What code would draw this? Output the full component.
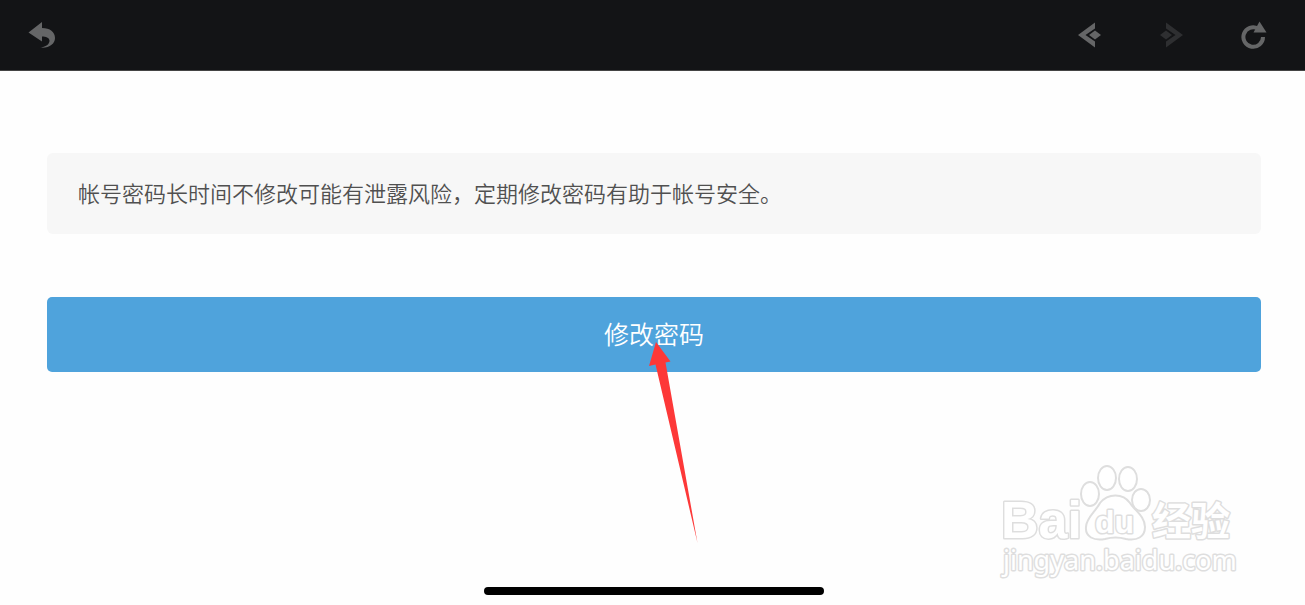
<script>
  let canGoBack = true;
  let canGoForward = false;
</script>

<div class="page">
  <header>
    <button class="nav" aria-label="返回">
      <svg width="28" height="28" viewBox="0 0 28 28">
        <path d="M0.500 11.500 L14 1 V7 C22 7 27 11 27 17 C27 23 21 27.500 12 26.500 C19 26 21.500 22.500 21.500 19.500 C21 16.500 18 15.500 14 15.500 V20.500 Z" />
      </svg>
    </button>
    <div class="tools">
      <button class="nav" aria-label="后退" disabled={!canGoBack}>
        <svg width="28" height="28" viewBox="0 0 28 28">
          <path d="M19 1.500 V7.500 L9.500 14 L19 20.500 V26.500 L2 14 Z" />
          <path d="M19 9.500 L25 14 L19 18.500 L13 14 Z" />
        </svg>
      </button>
      <button class="nav" aria-label="前进" disabled={!canGoForward}>
        <svg width="28" height="28" viewBox="0 0 28 28">
          <path d="M8 1.500 V7.500 L17.500 14 L8 20.500 V26.500 L25 14 Z" />
          <path d="M8 9.500 L14 14 L8 18.500 L2 14 Z" />
        </svg>
      </button>
      <button class="nav" aria-label="刷新">
        <svg width="28" height="28" viewBox="0 0 28 28">
          <path class="ring" d="M18 7.500 A9.800 9.800 0 1 0 23 16" />
          <path d="M19.500 0.500 L26.500 11.500 L13.500 11.500 Z" />
        </svg>
      </button>
    </div>
  </header>

  <main>
    <p class="tip">帐号密码长时间不修改可能有泄露风险，定期修改密码有助于帐号安全。</p>
    <div class="action">
      <button class="submit">修改密码</button>
      <svg class="arrow" width="52" height="202" viewBox="0 0 52 202">
        <path d="M8 0 L22.500 19.500 L17.500 20.500 L49.500 201 L7.500 22.500 L1 24 Z" />
      </svg>
    </div>
  </main>

  <footer>
    <div class="home-bar"></div>
  </footer>

  <svg class="watermark" width="250" height="120" viewBox="0 0 250 120">
    <text class="latin" x="8" y="78">Bai</text>
    <ellipse cx="97" cy="34" rx="9" ry="12" />
    <ellipse cx="114" cy="18" rx="9" ry="12" />
    <ellipse cx="135" cy="19" rx="9" ry="12" />
    <ellipse cx="148" cy="40" rx="9" ry="11" />
    <path d="M107 43 C115 33 130 33 137 43 C141 50 152 56 152 67 C152 77 144 81 133 79 C126 77 119 77 112 79 C101 81 92 77 93 67 C93 58 103 51 107 43 Z" />
    <text class="du" x="102" y="73">du</text>
    <text class="hanzi" x="159" y="75">经验</text>
    <text class="url" x="10" y="110">jingyan.baidu.com</text>
  </svg>
</div>

<style>
  :global(body) {
    margin: 0;
    background: #fefefe;
  }

  .page {
    position: relative;
    display: flex;
    flex-direction: column;
    min-height: 100vh;
    overflow: hidden;
    font-family: "Liberation Sans", "Noto Sans CJK SC", sans-serif;
  }

  header {
    display: flex;
    align-items: center;
    justify-content: space-between;
    height: 70px;
    padding: 0 37px 0 28px;
    background: #131416;
    border-bottom: 1px solid #444;
  }

  .tools {
    display: flex;
    gap: 54px;
  }

  .nav {
    display: flex;
    padding: 0;
    border: none;
    background: none;
    color: #656667;
    cursor: pointer;
  }

  .nav:disabled {
    color: #2e2f31;
    cursor: default;
  }

  .nav path {
    fill: currentColor;
  }

  .nav .ring {
    fill: none;
    stroke: currentColor;
    stroke-width: 4;
  }

  main {
    flex: 1;
    padding: 82px 44px 0 47px;
  }

  .tip {
    margin: 0 0 63px;
    padding: 23px 31px 25px;
    border-radius: 6px;
    background: #f7f7f7;
    color: #505050;
    font-family: "Noto Sans CJK SC", sans-serif;
    font-size: 22px;
    font-weight: 350;
    line-height: 33px;
  }

  .action {
    position: relative;
  }

  .submit {
    display: block;
    width: 100%;
    height: 75px;
    padding: 0 0 4px;
    border: none;
    border-radius: 5px;
    background: #4fa3dc;
    color: #fff;
    font-family: "Noto Sans CJK SC", sans-serif;
    font-size: 25px;
    font-weight: 350;
    cursor: pointer;
  }

  .arrow {
    position: absolute;
    top: 45px;
    left: 50%;
    margin-left: -6px;
    fill: #fd3838;
    pointer-events: none;
  }

  footer {
    padding: 0 44px 10px 47px;
  }

  .home-bar {
    width: 28%;
    height: 8px;
    margin: 0 auto;
    border-radius: 4px;
    background: #000;
  }

  .watermark {
    position: absolute;
    right: 62px;
    bottom: 25px;
    fill: #fff;
    stroke: #dedede;
    stroke-width: 2;
    pointer-events: none;
  }

  .watermark text {
    paint-order: stroke;
    stroke-width: 3;
    stroke-linejoin: round;
  }

  .latin {
    font-size: 52px;
    font-weight: bold;
  }

  .du {
    font-size: 32px;
    font-weight: bold;
  }

  .hanzi {
    font-family: "Noto Sans CJK SC", sans-serif;
    font-size: 39px;
    font-weight: bold;
  }

  .url {
    font-family: "Noto Sans", sans-serif;
    font-size: 27px;
  }
</style>
